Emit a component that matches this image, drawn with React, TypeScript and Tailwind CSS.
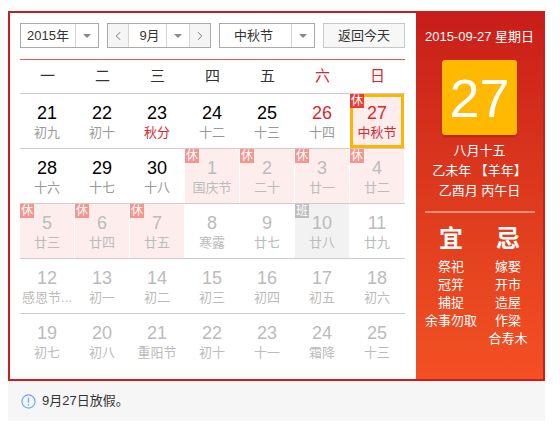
import { ChevronLeft, ChevronRight } from 'lucide-react';

type Day = {
  num: number;
  lunar: string;
  dim?: boolean;
  red?: boolean;
  lunarRed?: boolean;
  badge?: '休' | '班';
  holiday?: boolean;
  work?: boolean;
  today?: boolean;
};

const weeks: Day[][] = [
  [
    { num: 21, lunar: '初九' },
    { num: 22, lunar: '初十' },
    { num: 23, lunar: '秋分', lunarRed: true },
    { num: 24, lunar: '十二' },
    { num: 25, lunar: '十三' },
    { num: 26, lunar: '十四', red: true },
    { num: 27, lunar: '中秋节', red: true, lunarRed: true, badge: '休', today: true },
  ],
  [
    { num: 28, lunar: '十六' },
    { num: 29, lunar: '十七' },
    { num: 30, lunar: '十八' },
    { num: 1, lunar: '国庆节', dim: true, badge: '休', holiday: true },
    { num: 2, lunar: '二十', dim: true, badge: '休', holiday: true },
    { num: 3, lunar: '廿一', dim: true, badge: '休', holiday: true },
    { num: 4, lunar: '廿二', dim: true, badge: '休', holiday: true },
  ],
  [
    { num: 5, lunar: '廿三', dim: true, badge: '休', holiday: true },
    { num: 6, lunar: '廿四', dim: true, badge: '休', holiday: true },
    { num: 7, lunar: '廿五', dim: true, badge: '休', holiday: true },
    { num: 8, lunar: '寒露', dim: true },
    { num: 9, lunar: '廿七', dim: true },
    { num: 10, lunar: '廿八', dim: true, badge: '班', work: true },
    { num: 11, lunar: '廿九', dim: true },
  ],
  [
    { num: 12, lunar: '感恩节...', dim: true },
    { num: 13, lunar: '初一', dim: true },
    { num: 14, lunar: '初二', dim: true },
    { num: 15, lunar: '初三', dim: true },
    { num: 16, lunar: '初四', dim: true },
    { num: 17, lunar: '初五', dim: true },
    { num: 18, lunar: '初六', dim: true },
  ],
  [
    { num: 19, lunar: '初七', dim: true },
    { num: 20, lunar: '初八', dim: true },
    { num: 21, lunar: '重阳节', dim: true },
    { num: 22, lunar: '初十', dim: true },
    { num: 23, lunar: '十一', dim: true },
    { num: 24, lunar: '霜降', dim: true },
    { num: 25, lunar: '十三', dim: true },
  ],
];

const weekdays = ['一', '二', '三', '四', '五', '六', '日'];
const good = ['祭祀', '冠笄', '捕捉', '余事勿取'];
const bad = ['嫁娶', '开市', '造屋', '作梁', '合寿木'];

function Caret() {
  return (
    <span className="flex w-[23px] h-full items-center justify-center border-l border-[#d4d4d4]">
      <span className="w-0 h-0 border-l-[4px] border-r-[4px] border-t-[4px] border-l-transparent border-r-transparent border-t-[#888]" />
    </span>
  );
}

function DayCell({ d }: { d: Day }) {
  let bg = 'bg-white';
  if (d.holiday || d.today) bg = 'bg-[#fdeeed]';
  if (d.work) bg = 'bg-[#f2f2f2]';
  const numColor = d.red ? 'text-[#e0262c]' : d.dim ? 'text-[#bbbbbb]' : 'text-black';
  const lunarColor = d.lunarRed ? 'text-[#e0262c]' : d.dim ? 'text-[#bbbbbb]' : 'text-[#999999]';
  let badgeBg = 'bg-[#f5958d]';
  if (d.today) badgeBg = 'bg-[#ee3b32]';
  if (d.badge === '班') badgeBg = 'bg-[#bdbdbd]';

  return (
    <div className="w-[55px] h-[54px] pr-px">
      <div
        className={`relative h-full flex flex-col items-center ${bg} ${
          d.today ? 'border-[3px] border-[#ffb400] pt-[5px]' : 'pt-[8px]'
        }`}
      >
        {d.badge && (
          <span
            className={`absolute ${d.today ? '-left-[3px] -top-[3px]' : 'left-0 top-0'} w-[14px] h-[14px] flex items-center justify-center text-[12px] leading-none text-white ${badgeBg}`}
          >
            {d.badge}
          </span>
        )}
        <span className={`text-[18px] leading-[22px] ${numColor}`}>{d.num}</span>
        <span className={`text-[13px] leading-[17px] whitespace-nowrap ${lunarColor}`}>{d.lunar}</span>
      </div>
    </div>
  );
}

export default function App() {
  return (
    <div className="w-[560px] h-[432px] bg-white pt-[11px] pl-[8px] font-['Liberation_Sans','Noto_Sans_CJK_SC',sans-serif]">
      <div className="w-[537px] h-[370px] flex border-2 border-[#cc1c1c]">
        {/* left: calendar */}
        <div className="w-[406px] bg-white pl-[10px] pt-[10px]">
          <div className="flex h-[25px] text-[13px] text-[#333]">
            <div className="flex w-[79px] h-full border border-[#a9a9a9] bg-white">
              <span className="flex-1 flex items-center justify-center">2015年</span>
              <Caret />
            </div>
            <div className="flex ml-[8px] w-[104px] h-full border border-[#a9a9a9] bg-white">
              <span className="w-[21px] flex items-center justify-center bg-[#f5f5f5] border-r border-[#d4d4d4]">
                <ChevronLeft size={14} strokeWidth={1.5} color="#666" />
              </span>
              <span className="flex-1 flex items-center justify-center pl-[4px]">9月</span>
              <Caret />
              <span className="w-[21px] flex items-center justify-center bg-[#f5f5f5] border-l border-[#d4d4d4]">
                <ChevronRight size={14} strokeWidth={1.5} color="#666" />
              </span>
            </div>
            <div className="flex ml-[8px] w-[96px] h-full border border-[#a9a9a9] bg-white">
              <span className="flex-1 flex items-center justify-center pr-[4px]">中秋节</span>
              <Caret />
            </div>
            <button className="ml-[8px] w-[82px] h-full border border-[#c8c8c8] bg-[#f7f7f7] text-[#333]">
              返回今天
            </button>
          </div>

          <div className="w-[385px] mt-[11px] border-t border-[#e8574f]">
            <div className="flex h-[34px] border-b border-[#cccccc] text-[15px]">
              {weekdays.map((w, i) => (
                <span
                  key={w}
                  className={`w-[55px] flex items-center justify-center ${i >= 5 ? 'text-[#e0262c]' : 'text-[#333]'}`}
                >
                  {w}
                </span>
              ))}
            </div>
            {weeks.map((week, i) => (
              <div key={i} className={`flex ${i < weeks.length - 1 ? 'border-b border-[#cccccc]' : ''}`}>
                {week.map((d) => (
                  <DayCell key={`${i}-${d.num}`} d={d} />
                ))}
              </div>
            ))}
          </div>
        </div>

        {/* right: day detail */}
        <div className="flex-1 flex flex-col items-center bg-gradient-to-b from-[#c81d19] to-[#f35123] text-white pt-[14px]">
          <div className="text-[13px] leading-[20px]">2015-09-27 星期日</div>
          <div className="mt-[13px] w-[75px] h-[75px] rounded-[3px] bg-[#ffb900] shadow-[0_2px_2px_rgba(120,20,0,0.35)] flex items-center justify-center text-[54px] leading-none">
            27
          </div>
          <div className="mt-[6px] text-[13px] leading-[20px] text-center">
            <div>八月十五</div>
            <div>乙未年 【羊年】</div>
            <div>乙酉月 丙午日</div>
          </div>
          <div className="mt-[10px] w-[110px] h-[2px] bg-white/40" />
          <div className="mt-[12px] flex gap-[3px]">
            <div className="w-[54px] flex flex-col items-center">
              <span className="text-[24px] leading-[28px] font-semibold">宜</span>
              <div className="mt-[5px] flex flex-col items-center text-[13px] leading-[18px]">
                {good.map((g) => (
                  <span key={g} className="whitespace-nowrap">{g}</span>
                ))}
              </div>
            </div>
            <div className="w-[54px] flex flex-col items-center">
              <span className="text-[24px] leading-[28px] font-semibold">忌</span>
              <div className="mt-[5px] flex flex-col items-center text-[13px] leading-[18px]">
                {bad.map((b) => (
                  <span key={b} className="whitespace-nowrap">{b}</span>
                ))}
              </div>
            </div>
          </div>
        </div>
      </div>

      {/* footer note */}
      <div className="w-[537px] h-[40px] bg-[#f6f6f6] flex items-center pl-[13px] text-[13px] text-[#333]">
        <svg width="15" height="15" viewBox="0 0 16 16">
          <circle cx="8" cy="8" r="7" fill="none" stroke="#6aaaf0" strokeWidth="1.3" />
          <rect x="7.3" y="3.8" width="1.4" height="5.6" fill="#6aaaf0" />
          <rect x="7.3" y="10.8" width="1.4" height="1.5" fill="#6aaaf0" />
        </svg>
        <span className="ml-[6px]">9月27日放假。</span>
      </div>
    </div>
  );
}
